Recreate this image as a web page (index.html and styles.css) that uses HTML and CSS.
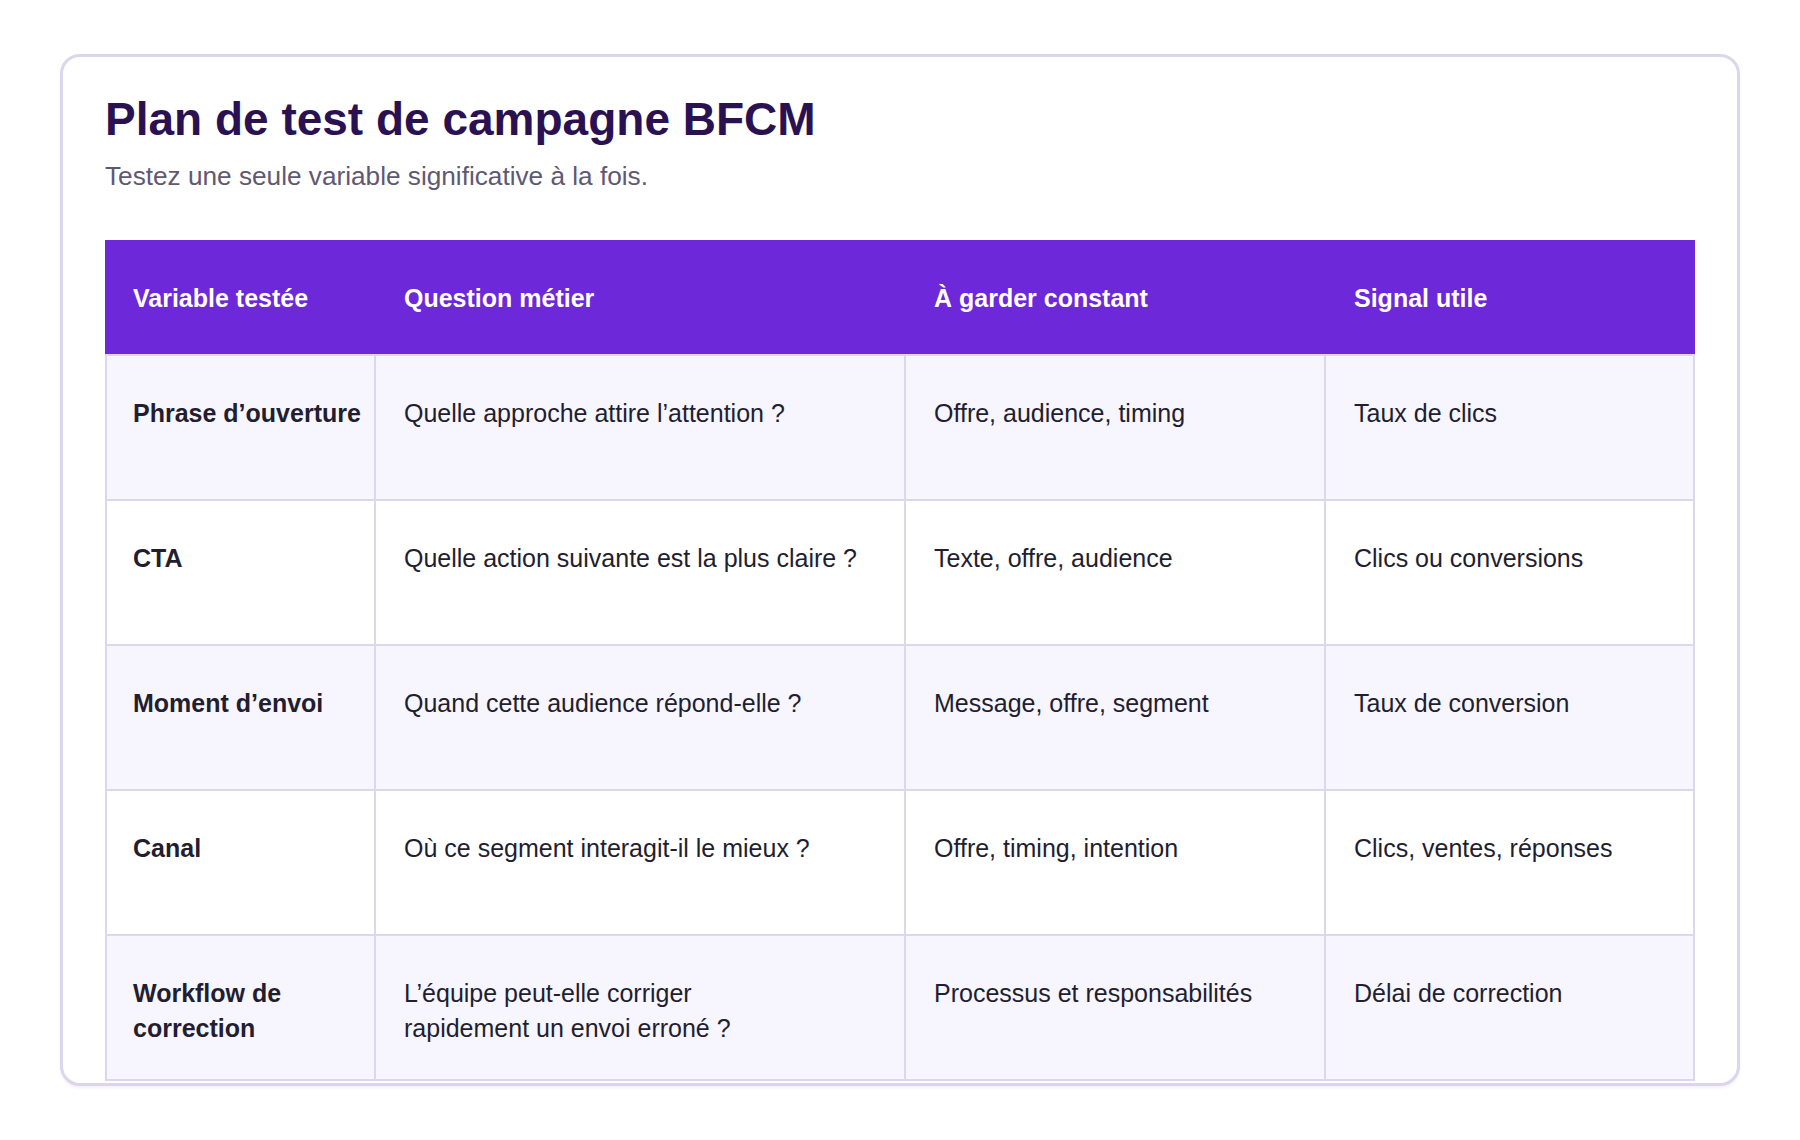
FILE: index.html
```html
<!DOCTYPE html>
<html lang="fr">
<head>
<meta charset="utf-8">
<title>Plan de test de campagne BFCM</title>
<link rel="stylesheet" href="styles.css">
</head>
<body>
  <main class="card">
    <h1 class="title">Plan de test de campagne BFCM</h1>
    <p class="subtitle">Testez une seule variable significative à la fois.</p>

    <div class="table" role="table">
      <div class="row head" role="row">
        <div class="cell" role="columnheader">Variable testée</div>
        <div class="cell" role="columnheader">Question métier</div>
        <div class="cell" role="columnheader">À garder constant</div>
        <div class="cell" role="columnheader">Signal utile</div>
      </div>
      <div class="body">
        <div class="row tint" role="row">
          <div class="cell key">Phrase d’ouverture</div>
          <div class="cell">Quelle approche attire l’attention ?</div>
          <div class="cell">Offre, audience, timing</div>
          <div class="cell">Taux de clics</div>
        </div>
        <div class="row" role="row">
          <div class="cell key">CTA</div>
          <div class="cell">Quelle action suivante est la plus claire ?</div>
          <div class="cell">Texte, offre, audience</div>
          <div class="cell">Clics ou conversions</div>
        </div>
        <div class="row tint" role="row">
          <div class="cell key">Moment d’envoi</div>
          <div class="cell">Quand cette audience répond-elle ?</div>
          <div class="cell">Message, offre, segment</div>
          <div class="cell">Taux de conversion</div>
        </div>
        <div class="row" role="row">
          <div class="cell key">Canal</div>
          <div class="cell">Où ce segment interagit-il le mieux ?</div>
          <div class="cell">Offre, timing, intention</div>
          <div class="cell">Clics, ventes, réponses</div>
        </div>
        <div class="row tint" role="row">
          <div class="cell key">Workflow de correction</div>
          <div class="cell">L’équipe peut-elle corriger<br>rapidement un envoi erroné ?</div>
          <div class="cell">Processus et responsabilités</div>
          <div class="cell">Délai de correction</div>
        </div>
      </div>
    </div>
  </main>
</body>
</html>
```

FILE: styles.css
```css
* {
  box-sizing: border-box;
}

html,
body {
  height: 100%;
}

body {
  margin: 0;
  padding: 54px 60px 54px;
  background: #ffffff;
  font-family: "Liberation Sans", Arial, Helvetica, sans-serif;
  color: #1f1b2e;
}

.card {
  height: 100%;
  overflow: hidden;
  border: 3px solid #dcd6ed;
  border-radius: 20px;
  padding: 35px 42px 0;
  background: #ffffff;
  box-shadow: 0 2px 3px rgba(90, 70, 150, 0.08);
}

.title {
  margin: 0;
  font-size: 46px;
  line-height: 1.2;
  font-weight: 700;
  color: #2a1252;
}

.subtitle {
  margin: 11px 0 0;
  font-size: 26.2px;
  line-height: 1.4;
  color: #5f5873;
}

.table {
  margin-top: 45px;
  width: 1590px;
  font-size: 25px;
  line-height: 1.4;
}

.row {
  display: grid;
  grid-template-columns: 269px 530px 420px 369px;
}

.head {
  height: 114px;
  align-items: center;
  background: #6d28d9;
  color: #ffffff;
  font-weight: 700;
  border-left: 2px solid #6d28d9;
}

.head .cell {
  padding: 4px 12px 0 28px;
}

.head .cell:first-child {
  padding-left: 26px;
}

.body {
  border-top: 2px solid #ddd7ee;
}

.body .row {
  height: 145px;
  border-left: 2px solid #ddd7ee;
  border-bottom: 2px solid #ddd7ee;
  background: #ffffff;
}

.body .row.tint {
  background: #f7f5fe;
}

.body .cell {
  padding: 40px 12px 0 28px;
  border-right: 2px solid #ddd7ee;
  color: #221e2f;
}

.body .cell:first-child {
  padding-left: 26px;
}

.key {
  font-weight: 700;
}
```
